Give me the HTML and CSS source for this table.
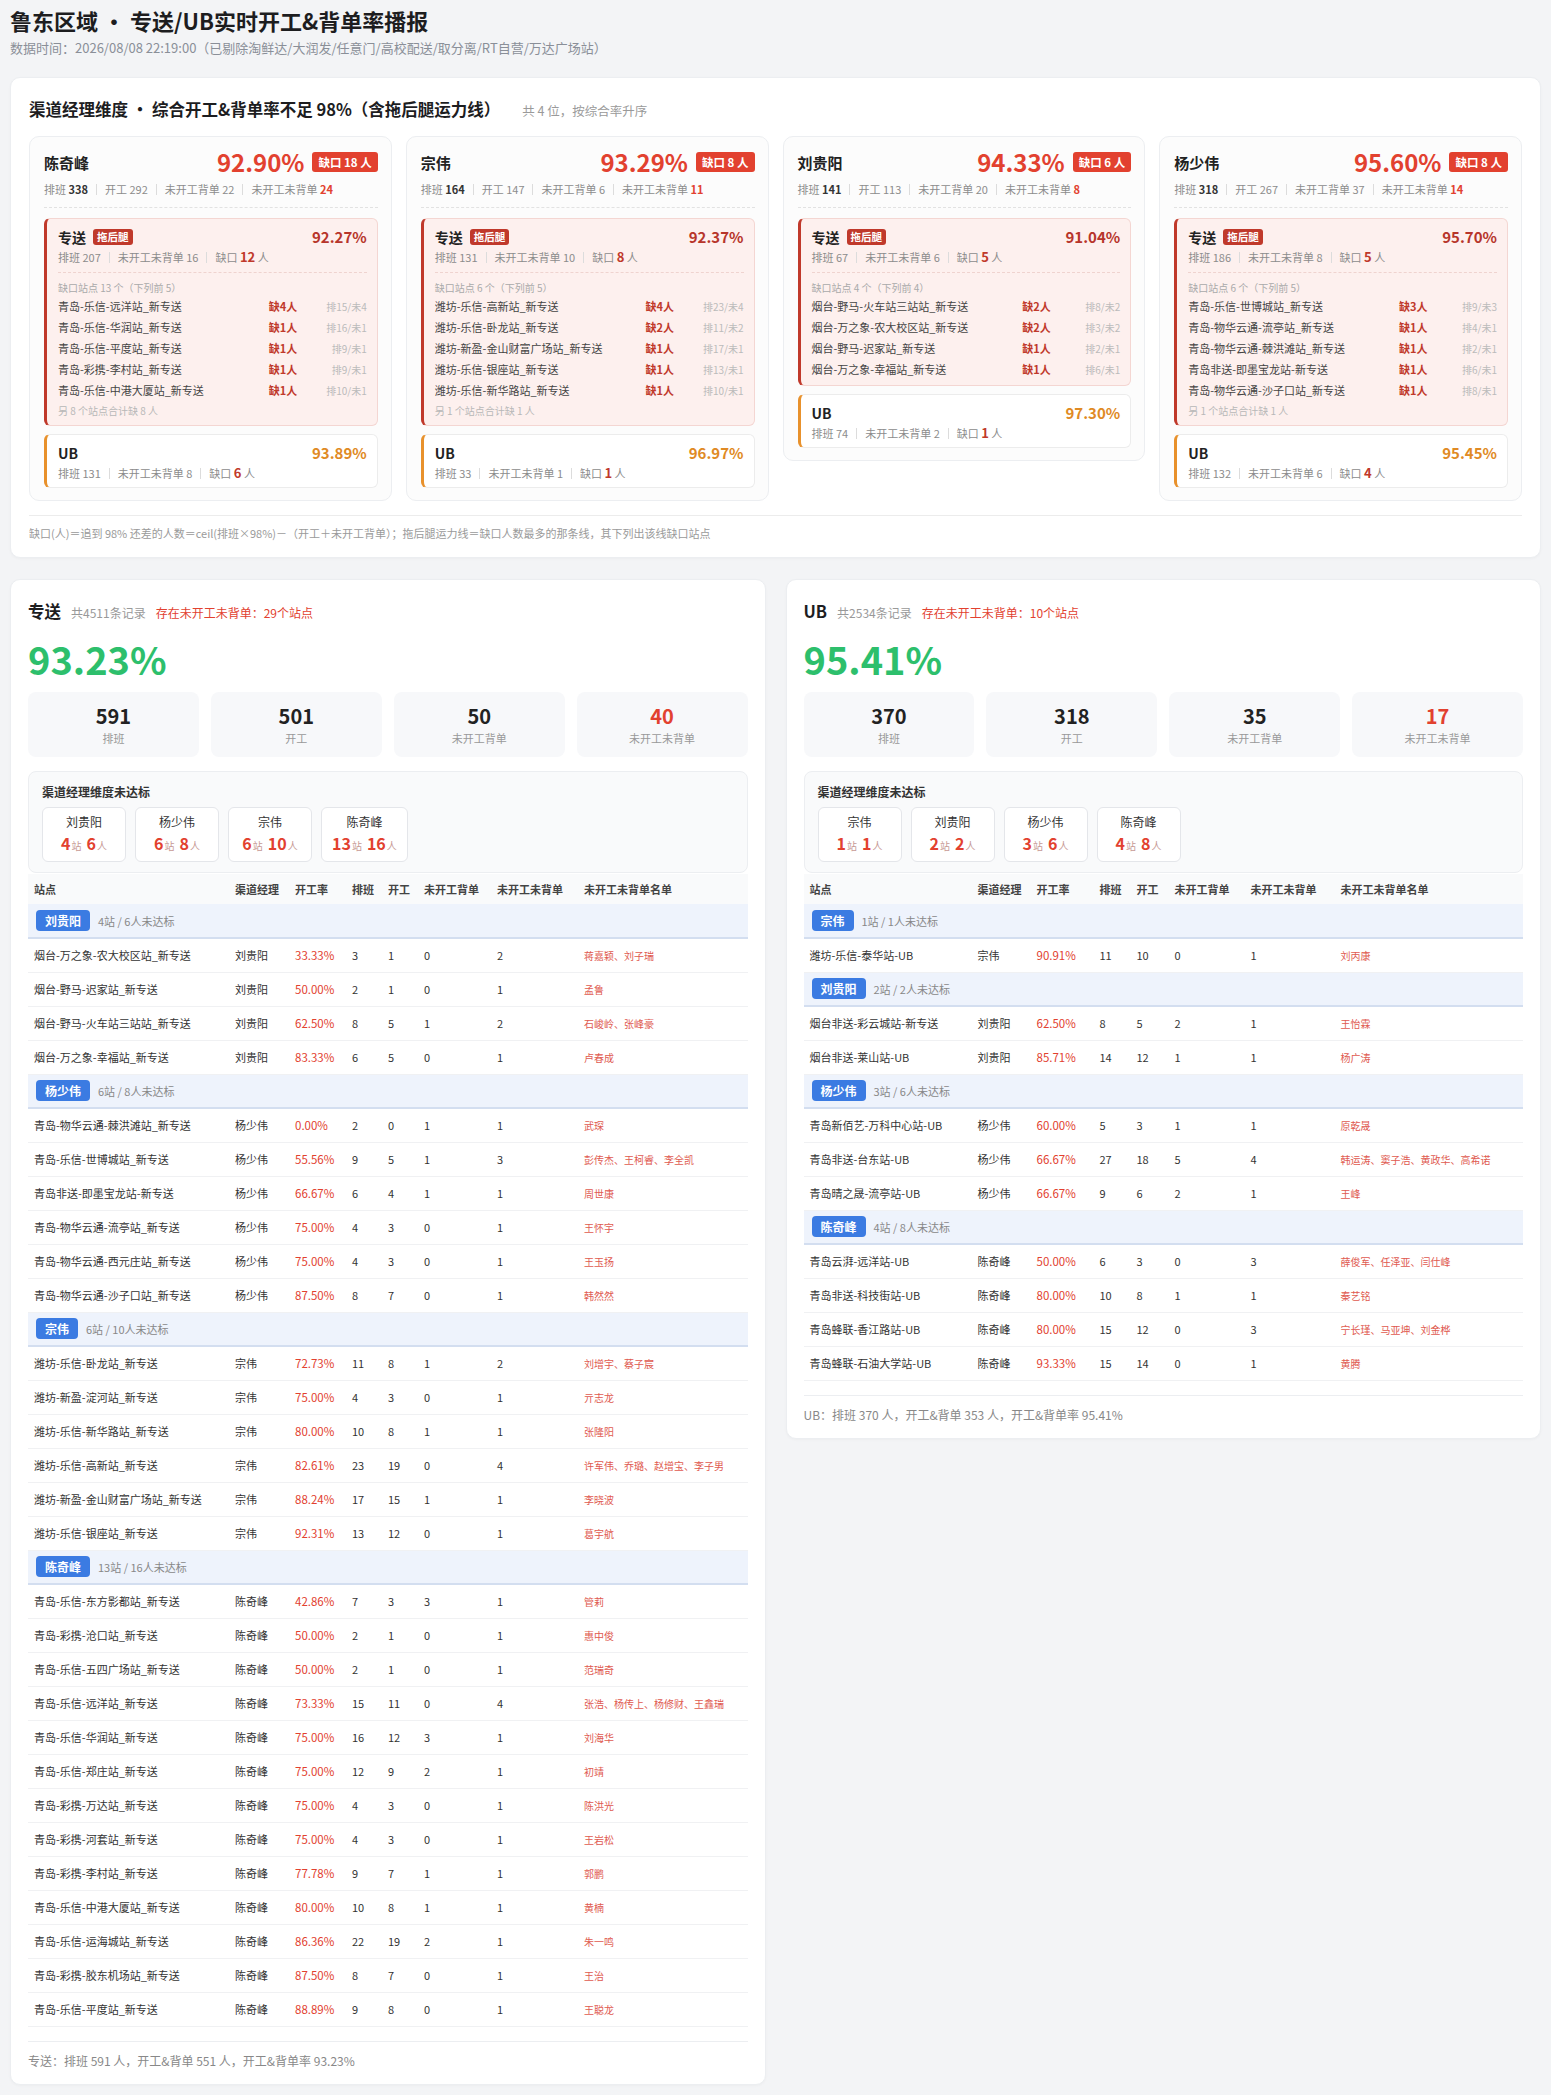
FILE: index.html
```html
<!DOCTYPE html>
<html lang="zh-CN">
<head>
<meta charset="utf-8">
<title>鲁东区域 · 专送/UB实时开工&amp;背单率播报</title>
<link rel="stylesheet" href="styles.css">
</head>
<body>
<h1 class="page-title">鲁东区域 · 专送/UB实时开工&amp;背单率播报</h1>
<div class="page-sub">数据时间：2026/08/08 22:19:00（已剔除淘鲜达/大润发/任意门/高校配送/取分离/RT自营/万达广场站）</div>

<section class="panel top-panel">
  <div class="top-head">
    <h2 class="top-title">渠道经理维度 · 综合开工&amp;背单率不足 98%（含拖后腿运力线）</h2>
    <span class="top-note">共 4 位，按综合率升序</span>
  </div>
  <div class="mgr-grid">
    <!-- 陈奇峰 -->
    <div class="mgr-card">
      <div class="mgr-head"><span class="mgr-name">陈奇峰</span><span class="mgr-rate">92.90%</span><span class="gap-badge">缺口 18 人</span></div>
      <div class="stats mgr-stats">排班 <b>338</b><i class="sep"></i>开工 292<i class="sep"></i>未开工背单 22<i class="sep"></i>未开工未背单 <b class="r">24</b></div>
      <div class="dash"></div>
      <div class="line lag">
        <div class="line-head"><span class="line-name">专送</span><span class="lag-badge">拖后腿</span><span class="line-rate">92.27%</span></div>
        <div class="stats">排班 207<i class="sep"></i>未开工未背单 16<i class="sep"></i>缺口 <b class="big">12</b> 人</div>
        <div class="dash dash-in"></div>
        <div class="miss-title">缺口站点 13 个（下列前 5）</div>
        <div class="miss-row"><span class="st">青岛-乐信-远洋站_新专送</span><span class="q">缺4人</span><span class="p">排15/未4</span></div>
        <div class="miss-row"><span class="st">青岛-乐信-华润站_新专送</span><span class="q">缺1人</span><span class="p">排16/未1</span></div>
        <div class="miss-row"><span class="st">青岛-乐信-平度站_新专送</span><span class="q">缺1人</span><span class="p">排9/未1</span></div>
        <div class="miss-row"><span class="st">青岛-彩携-李村站_新专送</span><span class="q">缺1人</span><span class="p">排9/未1</span></div>
        <div class="miss-row"><span class="st">青岛-乐信-中港大厦站_新专送</span><span class="q">缺1人</span><span class="p">排10/未1</span></div>
        <div class="miss-more">另 8 个站点合计缺 8 人</div>
      </div>
      <div class="line ub">
        <div class="line-head"><span class="line-name">UB</span><span class="line-rate">93.89%</span></div>
        <div class="stats">排班 131<i class="sep"></i>未开工未背单 8<i class="sep"></i>缺口 <b class="big">6</b> 人</div>
      </div>
    </div>
    <!-- 宗伟 -->
    <div class="mgr-card">
      <div class="mgr-head"><span class="mgr-name">宗伟</span><span class="mgr-rate">93.29%</span><span class="gap-badge">缺口 8 人</span></div>
      <div class="stats mgr-stats">排班 <b>164</b><i class="sep"></i>开工 147<i class="sep"></i>未开工背单 6<i class="sep"></i>未开工未背单 <b class="r">11</b></div>
      <div class="dash"></div>
      <div class="line lag">
        <div class="line-head"><span class="line-name">专送</span><span class="lag-badge">拖后腿</span><span class="line-rate">92.37%</span></div>
        <div class="stats">排班 131<i class="sep"></i>未开工未背单 10<i class="sep"></i>缺口 <b class="big">8</b> 人</div>
        <div class="dash dash-in"></div>
        <div class="miss-title">缺口站点 6 个（下列前 5）</div>
        <div class="miss-row"><span class="st">潍坊-乐信-高新站_新专送</span><span class="q">缺4人</span><span class="p">排23/未4</span></div>
        <div class="miss-row"><span class="st">潍坊-乐信-卧龙站_新专送</span><span class="q">缺2人</span><span class="p">排11/未2</span></div>
        <div class="miss-row"><span class="st">潍坊-新盈-金山财富广场站_新专送</span><span class="q">缺1人</span><span class="p">排17/未1</span></div>
        <div class="miss-row"><span class="st">潍坊-乐信-银座站_新专送</span><span class="q">缺1人</span><span class="p">排13/未1</span></div>
        <div class="miss-row"><span class="st">潍坊-乐信-新华路站_新专送</span><span class="q">缺1人</span><span class="p">排10/未1</span></div>
        <div class="miss-more">另 1 个站点合计缺 1 人</div>
      </div>
      <div class="line ub">
        <div class="line-head"><span class="line-name">UB</span><span class="line-rate">96.97%</span></div>
        <div class="stats">排班 33<i class="sep"></i>未开工未背单 1<i class="sep"></i>缺口 <b class="big">1</b> 人</div>
      </div>
    </div>
    <!-- 刘贵阳 -->
    <div class="mgr-card">
      <div class="mgr-head"><span class="mgr-name">刘贵阳</span><span class="mgr-rate">94.33%</span><span class="gap-badge">缺口 6 人</span></div>
      <div class="stats mgr-stats">排班 <b>141</b><i class="sep"></i>开工 113<i class="sep"></i>未开工背单 20<i class="sep"></i>未开工未背单 <b class="r">8</b></div>
      <div class="dash"></div>
      <div class="line lag">
        <div class="line-head"><span class="line-name">专送</span><span class="lag-badge">拖后腿</span><span class="line-rate">91.04%</span></div>
        <div class="stats">排班 67<i class="sep"></i>未开工未背单 6<i class="sep"></i>缺口 <b class="big">5</b> 人</div>
        <div class="dash dash-in"></div>
        <div class="miss-title">缺口站点 4 个（下列前 4）</div>
        <div class="miss-row"><span class="st">烟台-野马-火车站三站站_新专送</span><span class="q">缺2人</span><span class="p">排8/未2</span></div>
        <div class="miss-row"><span class="st">烟台-万之象-农大校区站_新专送</span><span class="q">缺2人</span><span class="p">排3/未2</span></div>
        <div class="miss-row"><span class="st">烟台-野马-迟家站_新专送</span><span class="q">缺1人</span><span class="p">排2/未1</span></div>
        <div class="miss-row"><span class="st">烟台-万之象-幸福站_新专送</span><span class="q">缺1人</span><span class="p">排6/未1</span></div>
      </div>
      <div class="line ub">
        <div class="line-head"><span class="line-name">UB</span><span class="line-rate">97.30%</span></div>
        <div class="stats">排班 74<i class="sep"></i>未开工未背单 2<i class="sep"></i>缺口 <b class="big">1</b> 人</div>
      </div>
    </div>
    <!-- 杨少伟 -->
    <div class="mgr-card">
      <div class="mgr-head"><span class="mgr-name">杨少伟</span><span class="mgr-rate">95.60%</span><span class="gap-badge">缺口 8 人</span></div>
      <div class="stats mgr-stats">排班 <b>318</b><i class="sep"></i>开工 267<i class="sep"></i>未开工背单 37<i class="sep"></i>未开工未背单 <b class="r">14</b></div>
      <div class="dash"></div>
      <div class="line lag">
        <div class="line-head"><span class="line-name">专送</span><span class="lag-badge">拖后腿</span><span class="line-rate">95.70%</span></div>
        <div class="stats">排班 186<i class="sep"></i>未开工未背单 8<i class="sep"></i>缺口 <b class="big">5</b> 人</div>
        <div class="dash dash-in"></div>
        <div class="miss-title">缺口站点 6 个（下列前 5）</div>
        <div class="miss-row"><span class="st">青岛-乐信-世博城站_新专送</span><span class="q">缺3人</span><span class="p">排9/未3</span></div>
        <div class="miss-row"><span class="st">青岛-物华云通-流亭站_新专送</span><span class="q">缺1人</span><span class="p">排4/未1</span></div>
        <div class="miss-row"><span class="st">青岛-物华云通-棘洪滩站_新专送</span><span class="q">缺1人</span><span class="p">排2/未1</span></div>
        <div class="miss-row"><span class="st">青岛非送-即墨宝龙站-新专送</span><span class="q">缺1人</span><span class="p">排6/未1</span></div>
        <div class="miss-row"><span class="st">青岛-物华云通-沙子口站_新专送</span><span class="q">缺1人</span><span class="p">排8/未1</span></div>
        <div class="miss-more">另 1 个站点合计缺 1 人</div>
      </div>
      <div class="line ub">
        <div class="line-head"><span class="line-name">UB</span><span class="line-rate">95.45%</span></div>
        <div class="stats">排班 132<i class="sep"></i>未开工未背单 6<i class="sep"></i>缺口 <b class="big">4</b> 人</div>
      </div>
    </div>
  </div>
  <div class="top-foot">缺口(人)＝追到 98% 还差的人数＝ceil(排班×98%)－（开工＋未开工背单）；拖后腿运力线＝缺口人数最多的那条线，其下列出该线缺口站点</div>
</section>

<div class="bottom">
  <!-- 专送 -->
  <section class="panel sec">
    <div class="sec-head"><span class="sec-title">专送</span><span class="sec-count">共4511条记录</span><span class="sec-warn">存在未开工未背单：29个站点</span></div>
    <div class="big-rate">93.23%</div>
    <div class="kpis">
      <div class="kpi"><div class="kpi-num">591</div><div class="kpi-lbl">排班</div></div>
      <div class="kpi"><div class="kpi-num">501</div><div class="kpi-lbl">开工</div></div>
      <div class="kpi"><div class="kpi-num">50</div><div class="kpi-lbl">未开工背单</div></div>
      <div class="kpi"><div class="kpi-num r">40</div><div class="kpi-lbl">未开工未背单</div></div>
    </div>
    <div class="mgr-box">
      <div class="mgr-box-title">渠道经理维度未达标</div>
      <div class="chips">
        <div class="chip"><div class="chip-name">刘贵阳</div><div class="chip-val"><b>4</b><small>站</small><b>6</b><small>人</small></div></div>
        <div class="chip"><div class="chip-name">杨少伟</div><div class="chip-val"><b>6</b><small>站</small><b>8</b><small>人</small></div></div>
        <div class="chip"><div class="chip-name">宗伟</div><div class="chip-val"><b>6</b><small>站</small><b>10</b><small>人</small></div></div>
        <div class="chip"><div class="chip-name">陈奇峰</div><div class="chip-val"><b>13</b><small>站</small><b>16</b><small>人</small></div></div>
      </div>
    </div>
    <table class="tbl tbl-zs">
      <colgroup><col class="c-st"><col class="c-mg"><col class="c-rt"><col class="c-pb"><col class="c-kg"><col class="c-bd"><col class="c-wb"><col></colgroup>
      <thead><tr><th>站点</th><th>渠道经理</th><th>开工率</th><th>排班</th><th>开工</th><th>未开工背单</th><th>未开工未背单</th><th>未开工未背单名单</th></tr></thead>
      <tbody>
        <tr class="grp"><td colspan="8"><span class="grp-badge">刘贵阳</span><span class="grp-info">4站 / 6人未达标</span></td></tr>
        <tr><td>烟台-万之象-农大校区站_新专送</td><td>刘贵阳</td><td class="rate">33.33%</td><td>3</td><td>1</td><td>0</td><td>2</td><td class="names">蒋嘉颖、刘子瑞</td></tr>
        <tr><td>烟台-野马-迟家站_新专送</td><td>刘贵阳</td><td class="rate">50.00%</td><td>2</td><td>1</td><td>0</td><td>1</td><td class="names">孟鲁</td></tr>
        <tr><td>烟台-野马-火车站三站站_新专送</td><td>刘贵阳</td><td class="rate">62.50%</td><td>8</td><td>5</td><td>1</td><td>2</td><td class="names">石峻岭、张峰豪</td></tr>
        <tr><td>烟台-万之象-幸福站_新专送</td><td>刘贵阳</td><td class="rate">83.33%</td><td>6</td><td>5</td><td>0</td><td>1</td><td class="names">卢春成</td></tr>
        <tr class="grp"><td colspan="8"><span class="grp-badge">杨少伟</span><span class="grp-info">6站 / 8人未达标</span></td></tr>
        <tr><td>青岛-物华云通-棘洪滩站_新专送</td><td>杨少伟</td><td class="rate">0.00%</td><td>2</td><td>0</td><td>1</td><td>1</td><td class="names">武琛</td></tr>
        <tr><td>青岛-乐信-世博城站_新专送</td><td>杨少伟</td><td class="rate">55.56%</td><td>9</td><td>5</td><td>1</td><td>3</td><td class="names">彭传杰、王柯睿、李全凯</td></tr>
        <tr><td>青岛非送-即墨宝龙站-新专送</td><td>杨少伟</td><td class="rate">66.67%</td><td>6</td><td>4</td><td>1</td><td>1</td><td class="names">周世康</td></tr>
        <tr><td>青岛-物华云通-流亭站_新专送</td><td>杨少伟</td><td class="rate">75.00%</td><td>4</td><td>3</td><td>0</td><td>1</td><td class="names">王怀宇</td></tr>
        <tr><td>青岛-物华云通-西元庄站_新专送</td><td>杨少伟</td><td class="rate">75.00%</td><td>4</td><td>3</td><td>0</td><td>1</td><td class="names">王玉扬</td></tr>
        <tr><td>青岛-物华云通-沙子口站_新专送</td><td>杨少伟</td><td class="rate">87.50%</td><td>8</td><td>7</td><td>0</td><td>1</td><td class="names">韩然然</td></tr>
        <tr class="grp"><td colspan="8"><span class="grp-badge">宗伟</span><span class="grp-info">6站 / 10人未达标</span></td></tr>
        <tr><td>潍坊-乐信-卧龙站_新专送</td><td>宗伟</td><td class="rate">72.73%</td><td>11</td><td>8</td><td>1</td><td>2</td><td class="names">刘增宇、蔡子宸</td></tr>
        <tr><td>潍坊-新盈-淀河站_新专送</td><td>宗伟</td><td class="rate">75.00%</td><td>4</td><td>3</td><td>0</td><td>1</td><td class="names">亓志龙</td></tr>
        <tr><td>潍坊-乐信-新华路站_新专送</td><td>宗伟</td><td class="rate">80.00%</td><td>10</td><td>8</td><td>1</td><td>1</td><td class="names">张隆阳</td></tr>
        <tr><td>潍坊-乐信-高新站_新专送</td><td>宗伟</td><td class="rate">82.61%</td><td>23</td><td>19</td><td>0</td><td>4</td><td class="names">许军伟、乔璐、赵增宝、李子男</td></tr>
        <tr><td>潍坊-新盈-金山财富广场站_新专送</td><td>宗伟</td><td class="rate">88.24%</td><td>17</td><td>15</td><td>1</td><td>1</td><td class="names">李晓波</td></tr>
        <tr><td>潍坊-乐信-银座站_新专送</td><td>宗伟</td><td class="rate">92.31%</td><td>13</td><td>12</td><td>0</td><td>1</td><td class="names">葛宇航</td></tr>
        <tr class="grp"><td colspan="8"><span class="grp-badge">陈奇峰</span><span class="grp-info">13站 / 16人未达标</span></td></tr>
        <tr><td>青岛-乐信-东方影都站_新专送</td><td>陈奇峰</td><td class="rate">42.86%</td><td>7</td><td>3</td><td>3</td><td>1</td><td class="names">管莉</td></tr>
        <tr><td>青岛-彩携-沧口站_新专送</td><td>陈奇峰</td><td class="rate">50.00%</td><td>2</td><td>1</td><td>0</td><td>1</td><td class="names">惠中俊</td></tr>
        <tr><td>青岛-乐信-五四广场站_新专送</td><td>陈奇峰</td><td class="rate">50.00%</td><td>2</td><td>1</td><td>0</td><td>1</td><td class="names">范瑞奇</td></tr>
        <tr><td>青岛-乐信-远洋站_新专送</td><td>陈奇峰</td><td class="rate">73.33%</td><td>15</td><td>11</td><td>0</td><td>4</td><td class="names">张浩、杨传上、杨修财、王鑫瑞</td></tr>
        <tr><td>青岛-乐信-华润站_新专送</td><td>陈奇峰</td><td class="rate">75.00%</td><td>16</td><td>12</td><td>3</td><td>1</td><td class="names">刘海华</td></tr>
        <tr><td>青岛-乐信-郑庄站_新专送</td><td>陈奇峰</td><td class="rate">75.00%</td><td>12</td><td>9</td><td>2</td><td>1</td><td class="names">初靖</td></tr>
        <tr><td>青岛-彩携-万达站_新专送</td><td>陈奇峰</td><td class="rate">75.00%</td><td>4</td><td>3</td><td>0</td><td>1</td><td class="names">陈洪光</td></tr>
        <tr><td>青岛-彩携-河套站_新专送</td><td>陈奇峰</td><td class="rate">75.00%</td><td>4</td><td>3</td><td>0</td><td>1</td><td class="names">王岩松</td></tr>
        <tr><td>青岛-彩携-李村站_新专送</td><td>陈奇峰</td><td class="rate">77.78%</td><td>9</td><td>7</td><td>1</td><td>1</td><td class="names">郭鹏</td></tr>
        <tr><td>青岛-乐信-中港大厦站_新专送</td><td>陈奇峰</td><td class="rate">80.00%</td><td>10</td><td>8</td><td>1</td><td>1</td><td class="names">黄楠</td></tr>
        <tr><td>青岛-乐信-运海城站_新专送</td><td>陈奇峰</td><td class="rate">86.36%</td><td>22</td><td>19</td><td>2</td><td>1</td><td class="names">朱一鸣</td></tr>
        <tr><td>青岛-彩携-胶东机场站_新专送</td><td>陈奇峰</td><td class="rate">87.50%</td><td>8</td><td>7</td><td>0</td><td>1</td><td class="names">王治</td></tr>
        <tr><td>青岛-乐信-平度站_新专送</td><td>陈奇峰</td><td class="rate">88.89%</td><td>9</td><td>8</td><td>0</td><td>1</td><td class="names">王聪龙</td></tr>
      </tbody>
    </table>
    <div class="sec-foot">专送：排班 591 人，开工&amp;背单 551 人，开工&amp;背单率 93.23%</div>
  </section>

  <!-- UB -->
  <section class="panel sec">
    <div class="sec-head"><span class="sec-title">UB</span><span class="sec-count">共2534条记录</span><span class="sec-warn">存在未开工未背单：10个站点</span></div>
    <div class="big-rate">95.41%</div>
    <div class="kpis">
      <div class="kpi"><div class="kpi-num">370</div><div class="kpi-lbl">排班</div></div>
      <div class="kpi"><div class="kpi-num">318</div><div class="kpi-lbl">开工</div></div>
      <div class="kpi"><div class="kpi-num">35</div><div class="kpi-lbl">未开工背单</div></div>
      <div class="kpi"><div class="kpi-num r">17</div><div class="kpi-lbl">未开工未背单</div></div>
    </div>
    <div class="mgr-box">
      <div class="mgr-box-title">渠道经理维度未达标</div>
      <div class="chips">
        <div class="chip"><div class="chip-name">宗伟</div><div class="chip-val"><b>1</b><small>站</small><b>1</b><small>人</small></div></div>
        <div class="chip"><div class="chip-name">刘贵阳</div><div class="chip-val"><b>2</b><small>站</small><b>2</b><small>人</small></div></div>
        <div class="chip"><div class="chip-name">杨少伟</div><div class="chip-val"><b>3</b><small>站</small><b>6</b><small>人</small></div></div>
        <div class="chip"><div class="chip-name">陈奇峰</div><div class="chip-val"><b>4</b><small>站</small><b>8</b><small>人</small></div></div>
      </div>
    </div>
    <table class="tbl tbl-ub">
      <colgroup><col class="c-st"><col class="c-mg"><col class="c-rt"><col class="c-pb"><col class="c-kg"><col class="c-bd"><col class="c-wb"><col></colgroup>
      <thead><tr><th>站点</th><th>渠道经理</th><th>开工率</th><th>排班</th><th>开工</th><th>未开工背单</th><th>未开工未背单</th><th>未开工未背单名单</th></tr></thead>
      <tbody>
        <tr class="grp"><td colspan="8"><span class="grp-badge">宗伟</span><span class="grp-info">1站 / 1人未达标</span></td></tr>
        <tr><td>潍坊-乐信-泰华站-UB</td><td>宗伟</td><td class="rate">90.91%</td><td>11</td><td>10</td><td>0</td><td>1</td><td class="names">刘丙康</td></tr>
        <tr class="grp"><td colspan="8"><span class="grp-badge">刘贵阳</span><span class="grp-info">2站 / 2人未达标</span></td></tr>
        <tr><td>烟台非送-彩云城站-新专送</td><td>刘贵阳</td><td class="rate">62.50%</td><td>8</td><td>5</td><td>2</td><td>1</td><td class="names">王怡霖</td></tr>
        <tr><td>烟台非送-莱山站-UB</td><td>刘贵阳</td><td class="rate">85.71%</td><td>14</td><td>12</td><td>1</td><td>1</td><td class="names">杨广涛</td></tr>
        <tr class="grp"><td colspan="8"><span class="grp-badge">杨少伟</span><span class="grp-info">3站 / 6人未达标</span></td></tr>
        <tr><td>青岛新佰艺-万科中心站-UB</td><td>杨少伟</td><td class="rate">60.00%</td><td>5</td><td>3</td><td>1</td><td>1</td><td class="names">原乾晟</td></tr>
        <tr><td>青岛非送-台东站-UB</td><td>杨少伟</td><td class="rate">66.67%</td><td>27</td><td>18</td><td>5</td><td>4</td><td class="names">韩运涛、窦子浩、黄政华、高希诺</td></tr>
        <tr><td>青岛晴之晟-流亭站-UB</td><td>杨少伟</td><td class="rate">66.67%</td><td>9</td><td>6</td><td>2</td><td>1</td><td class="names">王峰</td></tr>
        <tr class="grp"><td colspan="8"><span class="grp-badge">陈奇峰</span><span class="grp-info">4站 / 8人未达标</span></td></tr>
        <tr><td>青岛云湃-远洋站-UB</td><td>陈奇峰</td><td class="rate">50.00%</td><td>6</td><td>3</td><td>0</td><td>3</td><td class="names">薛俊军、任泽亚、闫仕峰</td></tr>
        <tr><td>青岛非送-科技街站-UB</td><td>陈奇峰</td><td class="rate">80.00%</td><td>10</td><td>8</td><td>1</td><td>1</td><td class="names">秦艺铭</td></tr>
        <tr><td>青岛蜂联-香江路站-UB</td><td>陈奇峰</td><td class="rate">80.00%</td><td>15</td><td>12</td><td>0</td><td>3</td><td class="names">宁长瑾、马亚坤、刘金桦</td></tr>
        <tr><td>青岛蜂联-石油大学站-UB</td><td>陈奇峰</td><td class="rate">93.33%</td><td>15</td><td>14</td><td>0</td><td>1</td><td class="names">黄腾</td></tr>
      </tbody>
    </table>
    <div class="sec-foot">UB：排班 370 人，开工&amp;背单 353 人，开工&amp;背单率 95.41%</div>
  </section>
</div>
</body>
</html>
```

FILE: styles.css
```css
* { box-sizing: border-box; margin: 0; padding: 0; }

body {
  background: #f3f4f6;
  font-family: "Noto Sans CJK SC", "Noto Sans", sans-serif;
  color: #222;
  padding: 7px 10px 10px;
}

.page-title {
  font-size: 22px;
  font-weight: 700;
  line-height: 26px;
  color: #1d1d1f;
}
.page-sub {
  margin-top: 6px;
  font-size: 13px;
  line-height: 18px;
  color: #8a8f98;
}

.panel {
  background: #fff;
  border: 1px solid #eceef1;
  border-radius: 10px;
  box-shadow: 0 1px 3px rgba(0, 0, 0, 0.03);
}

/* ---------- top section ---------- */
.top-panel {
  margin-top: 20px;
  padding: 19px 18px 15px;
}
.top-head {
  display: flex;
  align-items: baseline;
  line-height: 24px;
}
.top-title {
  font-size: 16.5px;
  font-weight: 700;
  color: #1d1d1f;
}
.top-note {
  margin-left: 22px;
  font-size: 12.5px;
  color: #9a9a9a;
}

.mgr-grid {
  display: grid;
  grid-template-columns: repeat(4, 1fr);
  gap: 14px;
  margin-top: 13px;
  align-items: start;
}
.mgr-card {
  background: #fcfcfc;
  border: 1px solid #eceef1;
  border-radius: 10px;
  padding: 10px 13px 12px 14px;
}
.mgr-head {
  display: flex;
  align-items: center;
  height: 30px;
}
.mgr-name {
  flex: 1;
  font-size: 15px;
  font-weight: 700;
  color: #222;
}
.mgr-rate {
  font-size: 24px;
  font-weight: 700;
  color: #e2412f;
  line-height: 30px;
}
.gap-badge {
  margin-left: 8px;
  background: #e2412f;
  color: #fff;
  font-size: 11.5px;
  font-weight: 700;
  line-height: 20px;
  padding: 0 6px;
  border-radius: 3px;
}

.stats {
  font-size: 11px;
  line-height: 20px;
  color: #8c8c8c;
  white-space: nowrap;
}
.mgr-stats { margin-top: 2px; }
.stats b { color: #333; font-weight: 700; }
.stats b.r { color: #e2412f; }
.stats b.big { color: #c0392b; font-size: 13px; line-height: 1; }
.sep {
  display: inline-block;
  width: 1px;
  height: 11px;
  background: #dcdcdc;
  margin: 0 8px;
  vertical-align: -1px;
}
.dash {
  margin-top: 8px;
  border-top: 1px dashed #e2e2e2;
}
.dash-in {
  margin-top: 5px;
  border-top-color: #efd3cf;
}

.line {
  margin-top: 10px;
  border: 1px solid #ececec;
  border-left-width: 3px;
  border-radius: 6px;
  padding: 8px 10px 5px 11px;
}
.line.lag {
  background: #fdf0ee;
  border-color: #f4d6d2;
  border-left-color: #c0392b;
}
.line.ub {
  margin-top: 8px;
  background: #fff;
  border-left-color: #e8912c;
  padding: 8px 10px 4px 11px;
}
.line-head {
  display: flex;
  align-items: center;
  line-height: 20px;
}
.line-name {
  font-size: 14px;
  font-weight: 700;
  color: #222;
}
.lag-badge {
  margin-left: 7px;
  background: #c0392b;
  color: #fff;
  font-size: 10.5px;
  font-weight: 700;
  line-height: 16px;
  padding: 0 4px;
  border-radius: 3px;
}
.line-rate {
  margin-left: auto;
  font-size: 15px;
  font-weight: 700;
  color: #b7352a;
}
.ub .line-rate { color: #e08a24; }

.miss-title {
  margin-top: 6px;
  font-size: 10px;
  line-height: 17px;
  color: #aaa;
}
.miss-row {
  display: grid;
  grid-template-columns: 1fr 42px 56px;
  font-size: 11px;
  line-height: 21px;
}
.miss-row .st { color: #444; white-space: nowrap; }
.miss-row .q { color: #c0392b; font-weight: 700; }
.miss-row .p { color: #bbb; font-size: 10px; text-align: right; }
.miss-more {
  font-size: 10px;
  line-height: 19px;
  color: #b8b8b8;
}

.top-foot {
  margin-top: 14px;
  border-top: 1px solid #ececec;
  padding-top: 8px;
  font-size: 11px;
  line-height: 18px;
  color: #9a9a9a;
}

/* ---------- bottom sections ---------- */
.bottom {
  display: grid;
  grid-template-columns: 1fr 1fr;
  gap: 20px;
  margin-top: 21px;
  align-items: start;
}
.sec {
  padding: 19px 17px 13px;
}
.sec-head {
  display: flex;
  align-items: baseline;
  line-height: 24px;
}
.sec-title {
  font-size: 16.5px;
  font-weight: 700;
  color: #1d1d1f;
}
.sec-count {
  margin-left: 10px;
  font-size: 12px;
  color: #999;
}
.sec-warn {
  margin-left: 10px;
  font-size: 12px;
  color: #e2412f;
}
.big-rate {
  margin-top: 12px;
  font-size: 38px;
  font-weight: 700;
  line-height: 44px;
  color: #2dbf6c;
}

.kpis {
  display: grid;
  grid-template-columns: repeat(4, 1fr);
  gap: 12px;
  margin-top: 11px;
}
.kpi {
  background: #f7f8fa;
  border-radius: 8px;
  padding: 11px 0 10px;
  text-align: center;
}
.kpi-num {
  font-size: 20px;
  font-weight: 700;
  line-height: 26px;
  color: #222;
}
.kpi-num.r { color: #e2412f; }
.kpi-lbl {
  font-size: 11px;
  line-height: 18px;
  color: #999;
}

.mgr-box {
  margin-top: 14px;
  background: #f9fafb;
  border: 1px solid #eceef1;
  border-radius: 8px;
  padding: 11px 13px 10px;
}
.mgr-box-title {
  font-size: 12px;
  font-weight: 700;
  line-height: 18px;
  color: #333;
}
.chips {
  display: flex;
  gap: 9px;
  margin-top: 6px;
}
.chip {
  min-width: 84px;
  background: #fff;
  border: 1px solid #e4e6ea;
  border-radius: 6px;
  padding: 5px 10px 6px;
  text-align: center;
}
.chip-name {
  font-size: 12px;
  line-height: 18px;
  color: #333;
}
.chip-val {
  display: flex;
  justify-content: center;
  align-items: baseline;
  height: 24px;
  line-height: 24px;
  color: #e2412f;
  white-space: nowrap;
}
.chip-val b {
  font-size: 16px;
  font-weight: 700;
}
.chip-val small {
  font-size: 10px;
  color: #c79a95;
  margin: 0 5px 0 1px;
}
.chip-val small:last-child { margin-right: 0; }

/* ---------- tables ---------- */
.tbl {
  width: 100%;
  margin-top: 1px;
  border-collapse: collapse;
  table-layout: fixed;
  font-size: 11px;
}
.tbl-zs .c-st { width: 201px; }
.tbl-zs .c-mg { width: 60px; }
.tbl-zs .c-rt { width: 57px; }
.tbl-zs .c-pb { width: 36px; }
.tbl-zs .c-kg { width: 36px; }
.tbl-zs .c-bd { width: 73px; }
.tbl-zs .c-wb { width: 87px; }
.tbl-ub .c-st { width: 168px; }
.tbl-ub .c-mg { width: 59px; }
.tbl-ub .c-rt { width: 63px; }
.tbl-ub .c-pb { width: 37px; }
.tbl-ub .c-kg { width: 38px; }
.tbl-ub .c-bd { width: 76px; }
.tbl-ub .c-wb { width: 90px; }

.tbl th {
  height: 30px;
  padding: 0 6px;
  text-align: left;
  font-weight: 700;
  color: #444;
  background: #f9fafb;
  white-space: nowrap;
}
.tbl td {
  height: 34px;
  padding: 0 6px;
  color: #333;
  border-bottom: 1px solid #f0f1f3;
  white-space: nowrap;
  overflow: hidden;
}
.tbl td.rate { color: #e2412f; font-size: 11.5px; }
.tbl td.names { color: #e05a50; font-size: 10px; }

.tbl tr.grp td {
  height: 34px;
  padding-left: 8px;
  background: #eef3fc;
  border-bottom: 2px solid #d3def0;
}
.grp-badge {
  display: inline-block;
  background: #3b7be2;
  color: #fff;
  font-size: 12px;
  font-weight: 700;
  line-height: 21px;
  padding: 0 9px;
  border-radius: 4px;
  vertical-align: middle;
}
.grp-info {
  margin-left: 8px;
  font-size: 11px;
  color: #888;
  vertical-align: middle;
}

.sec-foot {
  margin-top: 14px;
  border-top: 1px solid #eceef1;
  padding-top: 9px;
  font-size: 12px;
  line-height: 20px;
  color: #888;
}
```
